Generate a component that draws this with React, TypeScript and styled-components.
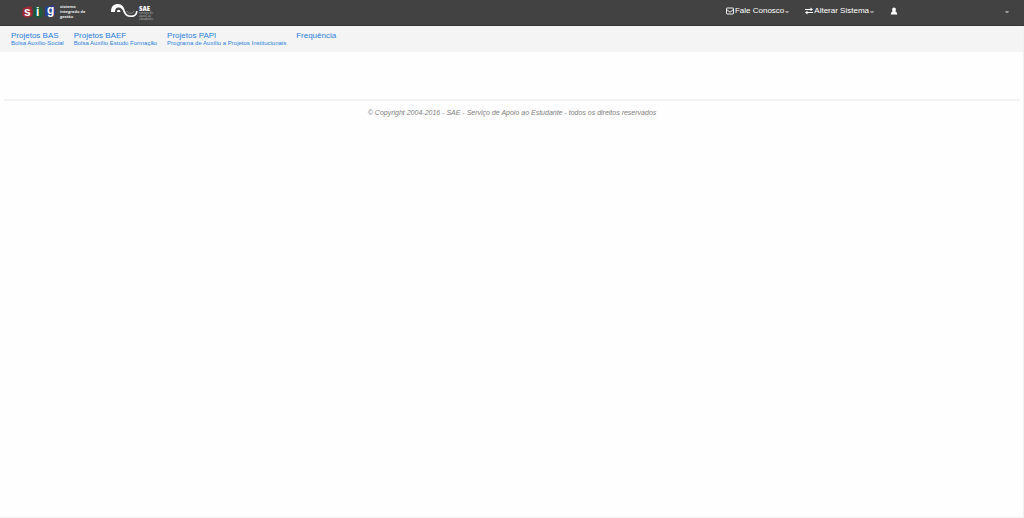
import React from "react";
import styled, { createGlobalStyle } from "styled-components";

const GlobalStyle = createGlobalStyle`
  * { box-sizing: border-box; }
  body {
    margin: 0;
    background: #fefefe;
    font-family: "Liberation Sans", Arial, sans-serif;
  }
`;

const Page = styled.div`
  min-height: 100vh;
  border-right: 1px solid #f1f1f1;
  border-bottom: 1px solid #f1f1f1;
`;

const TopBar = styled.header`
  display: flex;
  align-items: center;
  justify-content: space-between;
  height: 26px;
  margin-right: -1px;
  padding: 0 15px 0 22px;
  background: #424242;
  border-bottom: 1px solid #343434;
`;

const Brands = styled.div`
  display: flex;
  align-items: center;
  gap: 24px;
  padding-top: 1px;
`;

const BrandLink = styled.a`
  display: flex;
  text-decoration: none;
`;

const Actions = styled.nav`
  display: flex;
  align-items: center;
  gap: 16px;
  padding-bottom: 3px;
`;

const MenuButton = styled.button<{ $wide?: boolean }>`
  display: flex;
  align-items: center;
  justify-content: space-between;
  gap: 1px;
  width: ${(p) => (p.$wide ? "119px" : "auto")};
  height: 12px;
  padding: 0;
  border: 0;
  background: none;
  color: #ffffff;
  font: 8px/12px "Liberation Sans", Arial, sans-serif;
  white-space: nowrap;
  cursor: pointer;
`;

const Caret = styled.span`
  width: 4px;
  margin-top: 2px;
  border-top: 2px solid #9a9a9a;
  border-left: 1px solid transparent;
  border-right: 1px solid transparent;
`;

const SubNav = styled.nav`
  display: flex;
  gap: 10px;
  min-height: 26px;
  padding: 5px 11px 0;
  background: #f4f4f4;
`;

const NavItem = styled.a`
  display: flex;
  flex-direction: column;
  color: #2a7fdc;
  font-size: 8px;
  line-height: 9px;
  text-decoration: none;
  white-space: nowrap;
`;

const NavNote = styled.small`
  font-size: 6px;
  line-height: 6px;
`;

const Footer = styled.footer`
  margin: 47px 3px 0 4px;
  padding-top: 7px;
  border-top: 2px solid #f2f2f2;
  color: #808080;
  font-size: 7px;
  font-style: italic;
  line-height: 10px;
  text-align: center;
`;

const SigLogo = () => (
  <svg width="65" height="20" viewBox="0 0 65 20" role="img" aria-label="SIG">
    <path d="M1 5 9 3 11 9 10 13 4 15 0 12Z" fill="#9c2a36" />
    <path d="M12 5 18 3 21 8 20 14 14 15 11 12Z" fill="#1c5a3c" />
    <path d="M23 4 32 2 34 10 30 14 23 13Z" fill="#263f8e" />
    <g fill="#fff" fontFamily="Liberation Sans, Arial, sans-serif" fontWeight="700" fontSize="12">
      <text x="2" y="13">s</text>
      <text x="14" y="13">i</text>
      <text x="25" y="11">g</text>
    </g>
    <g fill="#e6e6e6" fontFamily="Open Sans, sans-serif" fontWeight="700" fontSize="4">
      <text x="38" y="5">sistema</text>
      <text x="38" y="10">integrado de</text>
      <text x="38" y="15">gestão</text>
    </g>
  </svg>
);

const SaeLogo = () => (
  <svg width="44" height="20" viewBox="0 0 44 20" role="img" aria-label="SAE">
    <path
      d="M0 9C0 3 3 1 7 1C11 1 13 4 14 8C15 11 17 12.500 20 12.500C23 12.500 25 11 25 8H26.500C26.500 12 24 14 20 14C16 14 13.500 12 12.500 9C11.500 6 10 4.500 7.500 4.500C5 4.500 4 6 4 9Z"
      fill="#fff"
    />
    <path d="M6 9C6 6 9 6 9.500 9Z" fill="#fff" />
    <path d="M16 8C17 11 22 11 23 8" fill="none" stroke="#9a9a9a" strokeWidth="0.800" />
    <g fill="#fff" fontFamily="Open Sans, sans-serif">
      <text x="28" y="8" fontSize="6" fontWeight="800">SAE</text>
      <g fontSize="3" fill="#bdbdbd">
        <text x="28" y="11">serviço de</text>
        <text x="28" y="14">apoio ao</text>
        <text x="28" y="17">estudante</text>
      </g>
    </g>
  </svg>
);

const MailIcon = () => (
  <svg width="8" height="8" viewBox="0 0 8 8" fill="none" stroke="#fff" strokeWidth="0.900" aria-hidden="true">
    <rect x="0.500" y="1" width="7" height="6" rx="0.500" />
    <path d="M.5 2.500 4 5.200 7.500 2.500" />
  </svg>
);

const SwapIcon = () => (
  <svg width="8" height="8" viewBox="0 0 8 8" fill="#fff" aria-hidden="true">
    <path d="M0 2H5.500V.5L8 2.500 5.500 4.300V3H0ZM8 5H2.500V3.700L0 5.500 2.500 7.500V6H8Z" />
  </svg>
);

const UserIcon = () => (
  <svg width="8" height="8" viewBox="0 0 8 8" fill="#fff" aria-hidden="true">
    <ellipse cx="4" cy="2.800" rx="1.900" ry="2.300" />
    <path d="M.8 7.500C.8 5.500 2 4.500 3 4.300H5C6 4.500 7.200 5.500 7.200 7.500Z" />
  </svg>
);

const links = [
  { title: "Projetos BAS", note: "Bolsa Auxílio-Social" },
  { title: "Projetos BAEF", note: "Bolsa Auxílio Estudo Formação" },
  { title: "Projetos PAPI", note: "Programa de Auxílio a Projetos Institucionais" },
  { title: "Frequência" },
];

export default function App() {
  return (
    <>
      <GlobalStyle />
      <Page>
        <TopBar>
          <Brands>
            <BrandLink href="#sig"><SigLogo /></BrandLink>
            <BrandLink href="#sae"><SaeLogo /></BrandLink>
          </Brands>
          <Actions>
            <MenuButton type="button"><MailIcon />Fale Conosco<Caret /></MenuButton>
            <MenuButton type="button"><SwapIcon />Alterar Sistema<Caret /></MenuButton>
            <MenuButton type="button" $wide aria-label="Usuário"><UserIcon /><Caret /></MenuButton>
          </Actions>
        </TopBar>
        <SubNav>
          {links.map((l) => (
            <NavItem key={l.title} href="#">
              {l.title}
              {l.note && <NavNote>{l.note}</NavNote>}
            </NavItem>
          ))}
        </SubNav>
        <Footer>© Copyright 2004-2016 - SAE - Serviço de Apoio ao Estudante - todos os direitos reservados</Footer>
      </Page>
    </>
  );
}
